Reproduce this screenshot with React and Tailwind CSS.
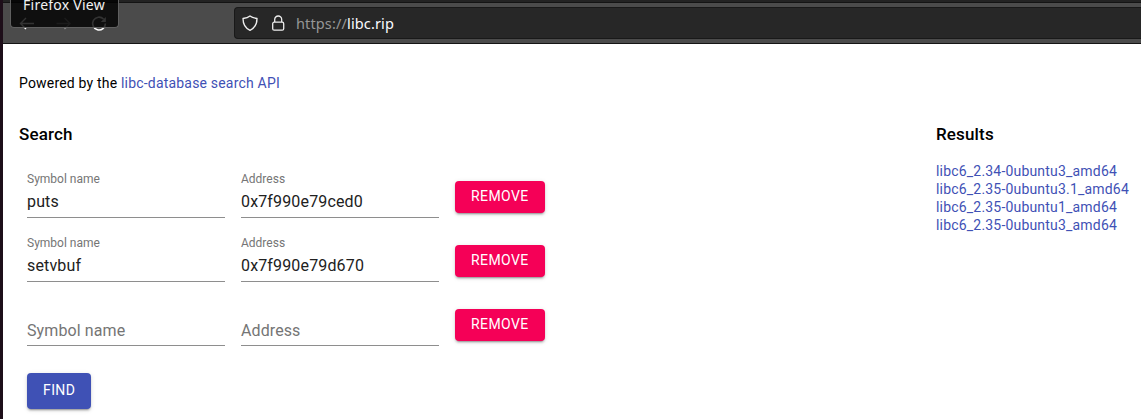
const rows = [
  { symbol: "puts", address: "0x7f990e79ced0" },
  { symbol: "setvbuf", address: "0x7f990e79d670" },
  { symbol: "", address: "" },
];

const results = [
  "libc6_2.34-0ubuntu3_amd64",
  "libc6_2.35-0ubuntu3.1_amd64",
  "libc6_2.35-0ubuntu1_amd64",
  "libc6_2.35-0ubuntu3_amd64",
];

function Field({ label, value }) {
  return (
    <div className="flex h-16 w-[198px] flex-col justify-end border-b border-[#8e8e8e]">
      {value ? (
        <>
          <span className="text-xs leading-[14px] text-[#757575]">{label}</span>
          <span className="mt-1.5 mb-[5px] text-base leading-5 tracking-[0.15px] text-[#212121]">{value}</span>
        </>
      ) : (
        <span className="mb-1 text-base leading-5 tracking-[0.1px] text-[#757575]">{label}</span>
      )}
    </div>
  );
}

function Button({ className, children }) {
  return (
    <button
      className={
        "block rounded text-left text-sm tracking-[0.4px] text-white shadow-[0_2px_2px_0_rgba(0,0,0,0.14),0_3px_1px_-2px_rgba(0,0,0,0.2),0_1px_5px_0_rgba(0,0,0,0.12)] " +
        className
      }
    >
      {children}
    </button>
  );
}

function Toolbar() {
  return (
    <header className="relative flex h-11 flex-col border-b border-[#151515] bg-[#4b4b4b] font-['Noto_Sans',sans-serif]">
      <div className="h-[3px] shrink-0 border-b border-[#141414] bg-[#232323]" />
      <div className="flex pt-1">
        <svg className="h-8 w-[231px] shrink-0" viewBox="0 0 231 32" fill="none" stroke="#fff" strokeWidth="1.4">
          <path d="M31 16.500H18M23 11L17.500 16.500L23 22" />
          <path d="M53.500 16.500h13M61.500 11L67 16.500l-5.500 5.500" stroke="#8b8b8b" />
          <path d="M100.500 12A6.400 6.400 0 1 0 102.400 16.500" strokeWidth="1.6" />
          <path d="M102.800 10v5h-5z" fill="#fff" stroke="none" />
        </svg>
        <div className="flex h-8 flex-1 items-center rounded-l border border-r-0 border-[#191919] bg-[#272727] pl-[7px]">
          <svg className="h-4 w-4" viewBox="0 0 16 16" fill="none" stroke="#eee" strokeWidth="1.35" strokeLinejoin="round">
            <path d="M8 1C6.200 2.500 3.500 3.200 1 3.500C1 9 3 13 8 15.300C13 13 15 9 15 3.500C12.500 3.200 9.800 2.500 8 1Z" />
          </svg>
          <svg className="ml-3 h-4 w-4" viewBox="0 0 16 16" fill="none" stroke="#eee" strokeWidth="1.3">
            <path d="M4.700 7V4.500a3.500 3.500 0 0 1 7 0V7" />
            <rect x="2.700" y="7.200" width="11" height="8" rx="1.500" />
          </svg>
          <span className="ml-[10px] text-[14.5px] leading-5 tracking-[0.13px] text-[#969696]">
            https://<span className="text-[#fbfbfe]">libc.rip</span>
          </span>
        </div>
      </div>
      <div className="absolute top-0 left-[7px] flex h-7 w-[109px] rounded-b border border-t-0 border-[#606060] bg-black/80 pl-3 text-sm leading-[10px] tracking-[0.25px] whitespace-nowrap text-[#f2f2f2]">
        Firefox View
      </div>
    </header>
  );
}

export default function App() {
  return (
    <div className="h-[419px] overflow-hidden border-l-[3px] border-[#1d0e19] bg-white font-[Roboto,sans-serif] text-black">
      <Toolbar />
      <main className="px-4 pt-[30px]">
        <p className="text-sm leading-[18px] tracking-[0.19px]">
          Powered by the <a className="text-[#3f51b5]">libc-database search API</a>
        </p>
        <div className="flex">
          <section className="w-[917px] shrink-0">
            <h2 className="mt-8 text-[17px] leading-5 font-medium tracking-[0.15px]">Search</h2>
            <div className="mt-[10px] pl-2">
              {rows.map((row, i) => (
                <div key={i} className="flex h-16 gap-4">
                  <Field label="Symbol name" value={row.symbol} />
                  <Field label="Address" value={row.address} />
                  <Button className="mt-[27px] h-8 w-[90px] bg-[#f50057] pb-0.5 pl-4">REMOVE</Button>
                </div>
              ))}
              <Button className="mt-[27px] h-9 w-16 bg-[#3f51b5] pb-0.5 pl-4">FIND</Button>
            </div>
          </section>
          <section>
            <h2 className="mt-8 text-[17px] leading-5 font-medium tracking-[0.15px]">Results</h2>
            <div className="mt-[18px] flex flex-col text-sm leading-[18px] tracking-[0.19px] whitespace-nowrap text-[#3f51b5]">
              {results.map((name) => (
                <a key={name}>{name}</a>
              ))}
            </div>
          </section>
        </div>
      </main>
    </div>
  );
}
